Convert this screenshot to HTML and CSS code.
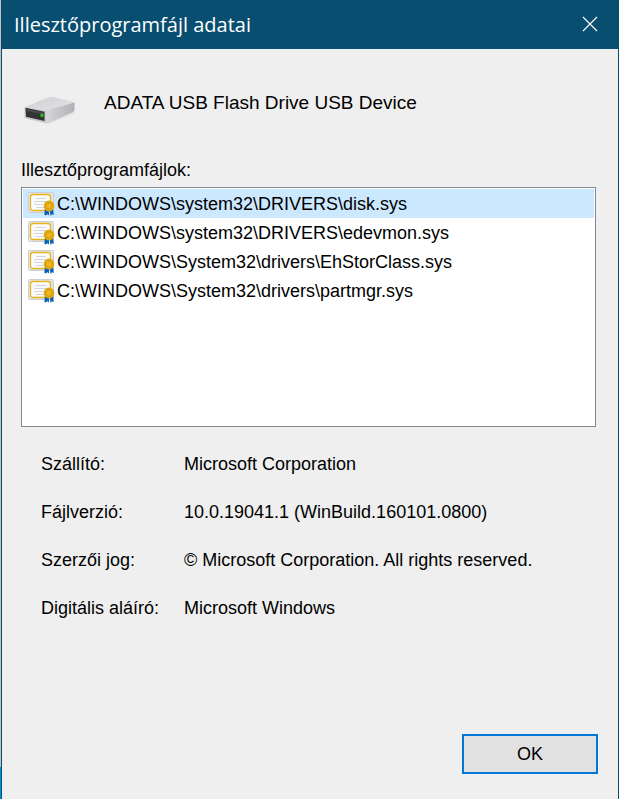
FILE: index.html
```
<!DOCTYPE html>
<html lang="hu">
<head>
    <meta charset="UTF-8">
    <meta name="viewport" content="width=device-width, initial-scale=1.0">
    <title>Illesztőprogramfájl adatai</title>
    <link rel="stylesheet" href="styles.css">
</head>
<body>
    <!-- shared icon for signed driver files -->
    <svg class="symbols" aria-hidden="true">
        <symbol id="certificate" viewBox="0 0 27 27">
            <rect x="0.5" y="2.5" width="25" height="20" rx="1" fill="#e4e5e9" stroke="#cbced6"/>
            <rect x="2.500" y="4.500" width="20" height="16" rx="2.500" fill="#fbfbfb" stroke="#e8b41c" stroke-width="1.300"/>
            <path d="M8 8.500h10M6 11.500h12M6 14.500h9M8 17.500h8" stroke="#d3d6dc"/>
            <path d="M17 18.500h4v7l-1.500-1.200L17.500 25.500l-1.200-1zM21.500 18.500H25l.8 6.500-1.800-.8-1.500 1.800z" fill="#0c62b8"/>
            <circle cx="21" cy="16" r="5.400" fill="#e3a90c"/>
            <circle cx="21" cy="16" r="3.200" fill="#ebb722" stroke="#cf9508" stroke-width="0.700"/>
        </symbol>
    </svg>

    <main class="dialog">
        <header class="titlebar">
            <h1>Illesztőprogramfájl adatai</h1>
            <button class="close" type="button" aria-label="Bezárás">
                <svg width="16" height="16" viewBox="0 0 16 16"><path d="M1 1L15 15M15 1L1 15" stroke="#fff" stroke-width="1.2"/></svg>
            </button>
        </header>

        <div class="content">
            <div class="device">
                <svg width="52" height="32" viewBox="0 0 52 32" aria-hidden="true">
                    <defs>
                        <linearGradient id="top" x1="0" y1="0" x2="1" y2="1">
                            <stop offset="0" stop-color="#d0d0d3"/>
                            <stop offset="1" stop-color="#e4e4e8"/>
                        </linearGradient>
                        <linearGradient id="side" x1="0" y1="0" x2="1" y2="0">
                            <stop offset="0" stop-color="#d8d8db"/>
                            <stop offset="1" stop-color="#b0b0b5"/>
                        </linearGradient>
                    </defs>
                    <path d="M22 30L51 19v1.500L24 31z" fill="#dedede"/>
                    <path d="M1 14L24 4.500q3-1 6-.3l19 4.500q1.500.5 1.500 2L22 19z" fill="url(#top)"/>
                    <path d="M21 18L50.500 9.500V17q0 1.500-2 2.200L24 30l-3 .3z" fill="url(#side)"/>
                    <path d="M.5 14L22 18v12.200L1.500 25.500q-1-.5-1-1.500z" fill="#c8c8cb"/>
                    <path d="M1.500 14.800L20.500 18.800v9.200L2 23.800z" fill="#333534"/>
                    <path d="M3 16L20 19.500v2L3 18z" fill="#494b4a"/>
                    <rect x="16.500" y="21" width="2.800" height="2.800" fill="#1ed41e"/>
                </svg>
                <span>ADATA USB Flash Drive USB Device</span>
            </div>

            <p class="list-label" id="files-label">Illesztőprogramfájlok:</p>
            <ul class="files" role="listbox" tabindex="0" aria-labelledby="files-label">
                <li class="selected" role="option" aria-selected="true"><svg class="file-icon"><use href="#certificate"/></svg>C:\WINDOWS\system32\DRIVERS\disk.sys</li>
                <li role="option" aria-selected="false"><svg class="file-icon"><use href="#certificate"/></svg>C:\WINDOWS\system32\DRIVERS\edevmon.sys</li>
                <li role="option" aria-selected="false"><svg class="file-icon"><use href="#certificate"/></svg>C:\WINDOWS\System32\drivers\EhStorClass.sys</li>
                <li role="option" aria-selected="false"><svg class="file-icon"><use href="#certificate"/></svg>C:\WINDOWS\System32\drivers\partmgr.sys</li>
            </ul>

            <dl class="details">
                <dt>Szállító:</dt>
                <dd>Microsoft Corporation</dd>
                <dt>Fájlverzió:</dt>
                <dd>10.0.19041.1 (WinBuild.160101.0800)</dd>
                <dt>Szerzői jog:</dt>
                <dd>© Microsoft Corporation. All rights reserved.</dd>
                <dt>Digitális aláíró:</dt>
                <dd>Microsoft Windows</dd>
            </dl>
        </div>

        <footer class="actions">
            <button class="ok" type="button">OK</button>
        </footer>
    </main>
</body>
</html>
```
FILE: styles.css
```
* {
    box-sizing: border-box;
}

body {
    margin: 0;
    padding-left: 1px;
    /* strip of the desktop left of the window */
    background: linear-gradient(#c4c0be 96%, #0092d8 96%);
    color: #000;
    font-family: "Liberation Sans", Arial, sans-serif;
    font-size: 18px;
    line-height: 24px;
}

.symbols {
    display: none;
}

.dialog {
    display: flex;
    flex-direction: column;
    min-height: 100vh;
    border: 1px solid #084e70;
    border-width: 0 1px;
    background: #efefef;
}

.titlebar {
    display: flex;
    justify-content: space-between;
    height: 49px;
    padding-left: 12px;
    background: #084e70;
    color: #fff;
}

.titlebar h1 {
    margin: 0;
    font-family: "Open Sans", "Segoe UI", sans-serif;
    font-size: 20px;
    font-weight: 400;
    line-height: 50px;
}

.close {
    display: flex;
    align-items: center;
    justify-content: center;
    width: 56px;
    height: 48px;
    padding: 0;
    border: none;
    background: none;
}

.content {
    padding: 44px 22px 0 19px;
}

.device {
    display: flex;
    gap: 28px;
    padding-left: 3px;
    font-size: 19px;
}

.device span {
    line-height: 20px;
}

.list-label {
    margin: 33px 0 5px;
}

.files {
    height: 240px;
    margin: 0;
    padding: 1px;
    border: 1px solid #828790;
    background: #fff;
    list-style: none;
    outline: none;
}

.files li {
    display: flex;
    align-items: center;
    height: 29px;
    padding-left: 5px;
    gap: 2px;
}

.files .selected {
    background: #cce8ff;
}

.file-icon {
    width: 27px;
    height: 27px;
}

.details {
    display: grid;
    grid-template-columns: 143px 1fr;
    row-gap: 24px;
    margin: 25px 0 24px;
    padding-left: 20px;
}

.details dd {
    margin: 0;
}

.actions {
    display: flex;
    justify-content: flex-end;
    margin-top: auto;
    padding: 0 20px 25px;
}

.ok {
    width: 136px;
    height: 40px;
    border: 2px solid #0078d7;
    background: #e1e1e1;
    color: #000;
    font: inherit;
}
```
